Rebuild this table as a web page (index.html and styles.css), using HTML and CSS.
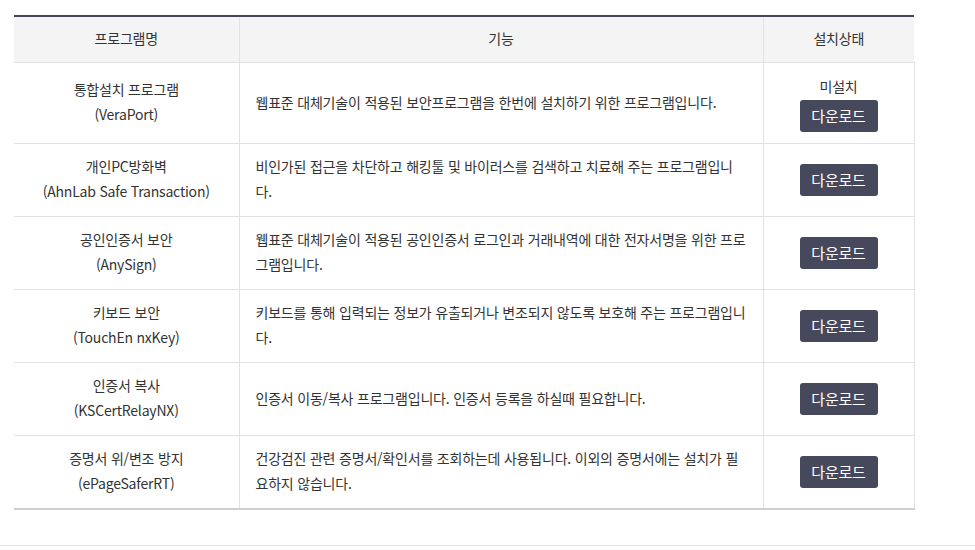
FILE: index.html
```html
<!DOCTYPE html>
<html lang="ko">
<head>
<meta charset="utf-8">
<link rel="stylesheet" href="styles.css">
</head>
<body>
<div class="wrap">
  <table class="prog">
    <colgroup>
      <col class="c1"><col class="c2"><col class="c3">
    </colgroup>
    <thead>
      <tr><th>프로그램명</th><th>기능</th><th>설치상태</th></tr>
    </thead>
    <tbody>
      <tr class="tall">
        <td class="name">통합설치 프로그램<br>(VeraPort)</td>
        <td class="desc">웹표준 대체기술이 적용된 보안프로그램을 한번에 설치하기 위한 프로그램입니다.</td>
        <td class="state"><div class="status">미설치</div><a class="btn">다운로드</a></td>
      </tr>
      <tr>
        <td class="name">개인PC방화벽<br>(AhnLab Safe Transaction)</td>
        <td class="desc">비인가된 접근을 차단하고 해킹툴 및 바이러스를 검색하고 치료해 주는 프로그램입니다.</td>
        <td class="state"><a class="btn">다운로드</a></td>
      </tr>
      <tr>
        <td class="name">공인인증서 보안<br>(AnySign)</td>
        <td class="desc">웹표준 대체기술이 적용된 공인인증서 로그인과 거래내역에 대한 전자서명을 위한 프로그램입니다.</td>
        <td class="state"><a class="btn">다운로드</a></td>
      </tr>
      <tr>
        <td class="name">키보드 보안<br>(TouchEn nxKey)</td>
        <td class="desc">키보드를 통해 입력되는 정보가 유출되거나 변조되지 않도록 보호해 주는 프로그램입니다.</td>
        <td class="state"><a class="btn">다운로드</a></td>
      </tr>
      <tr>
        <td class="name">인증서 복사<br>(KSCertRelayNX)</td>
        <td class="desc">인증서 이동/복사 프로그램입니다. 인증서 등록을 하실때 필요합니다.</td>
        <td class="state"><a class="btn">다운로드</a></td>
      </tr>
      <tr>
        <td class="name">증명서 위/변조 방지<br>(ePageSaferRT)</td>
        <td class="desc">건강검진 관련 증명서/확인서를 조회하는데 사용됩니다. 이외의 증명서에는 설치가 필요하지 않습니다.</td>
        <td class="state"><a class="btn">다운로드</a></td>
      </tr>
    </tbody>
  </table>
</div>
<div class="footline"></div>
</body>
</html>
```
FILE: styles.css
```css
html, body {
  margin: 0;
  padding: 0;
  background: #fff;
}
body {
  font-family: "Noto Sans CJK KR", "Noto Sans", sans-serif;
  font-size: 14px;
  color: #333;
}
.wrap {
  padding: 15px 0 0 14px;
}
.prog {
  width: 900px;
  table-layout: fixed;
  border-collapse: collapse;
  border-top: 2px solid #46475a;
  border-bottom: 2px solid #cfcfd2;
  letter-spacing: -0.2px;
}
.c1 { width: 225px; }
.c2 { width: 524px; }
.c3 { width: 151px; }
.prog th {
  height: 43px;
  padding: 0 0 2px;
  background: #f4f4f4;
  font-weight: normal;
  text-align: center;
  border-bottom: 1px solid #e2e2e2;
  border-left: 1px solid #e2e2e2;
  line-height: 25px;
}
.prog th:first-child { border-left: none; }
.prog td {
  padding: 10px 0 12px;
  line-height: 25px;
  border-bottom: 1px solid #e2e2e2;
  border-left: 1px solid #e2e2e2;
  vertical-align: middle;
}
.prog td:first-child { border-left: none; }
.prog td:last-child { border-right: 1px solid #e2e2e2; }
.prog tbody tr:last-child td { border-bottom: none; }
.name { text-align: center; }
.desc { padding: 10px 16px 12px !important; }
.prog td.state { text-align: center; padding: 11px 0; }
.tall td { height: 58px; }
.status { line-height: 25px; margin-top: -1px; margin-bottom: 1px; }
.btn {
  display: inline-block;
  width: 78px;
  height: 32px;
  line-height: 32px;
  background: #46485c;
  color: #fff;
  border-radius: 3px;
  font-size: 15px;
  text-align: center;
  vertical-align: top;
}
.footline {
  margin-top: 35px;
  border-top: 1px solid #e2e2e2;
}
```
